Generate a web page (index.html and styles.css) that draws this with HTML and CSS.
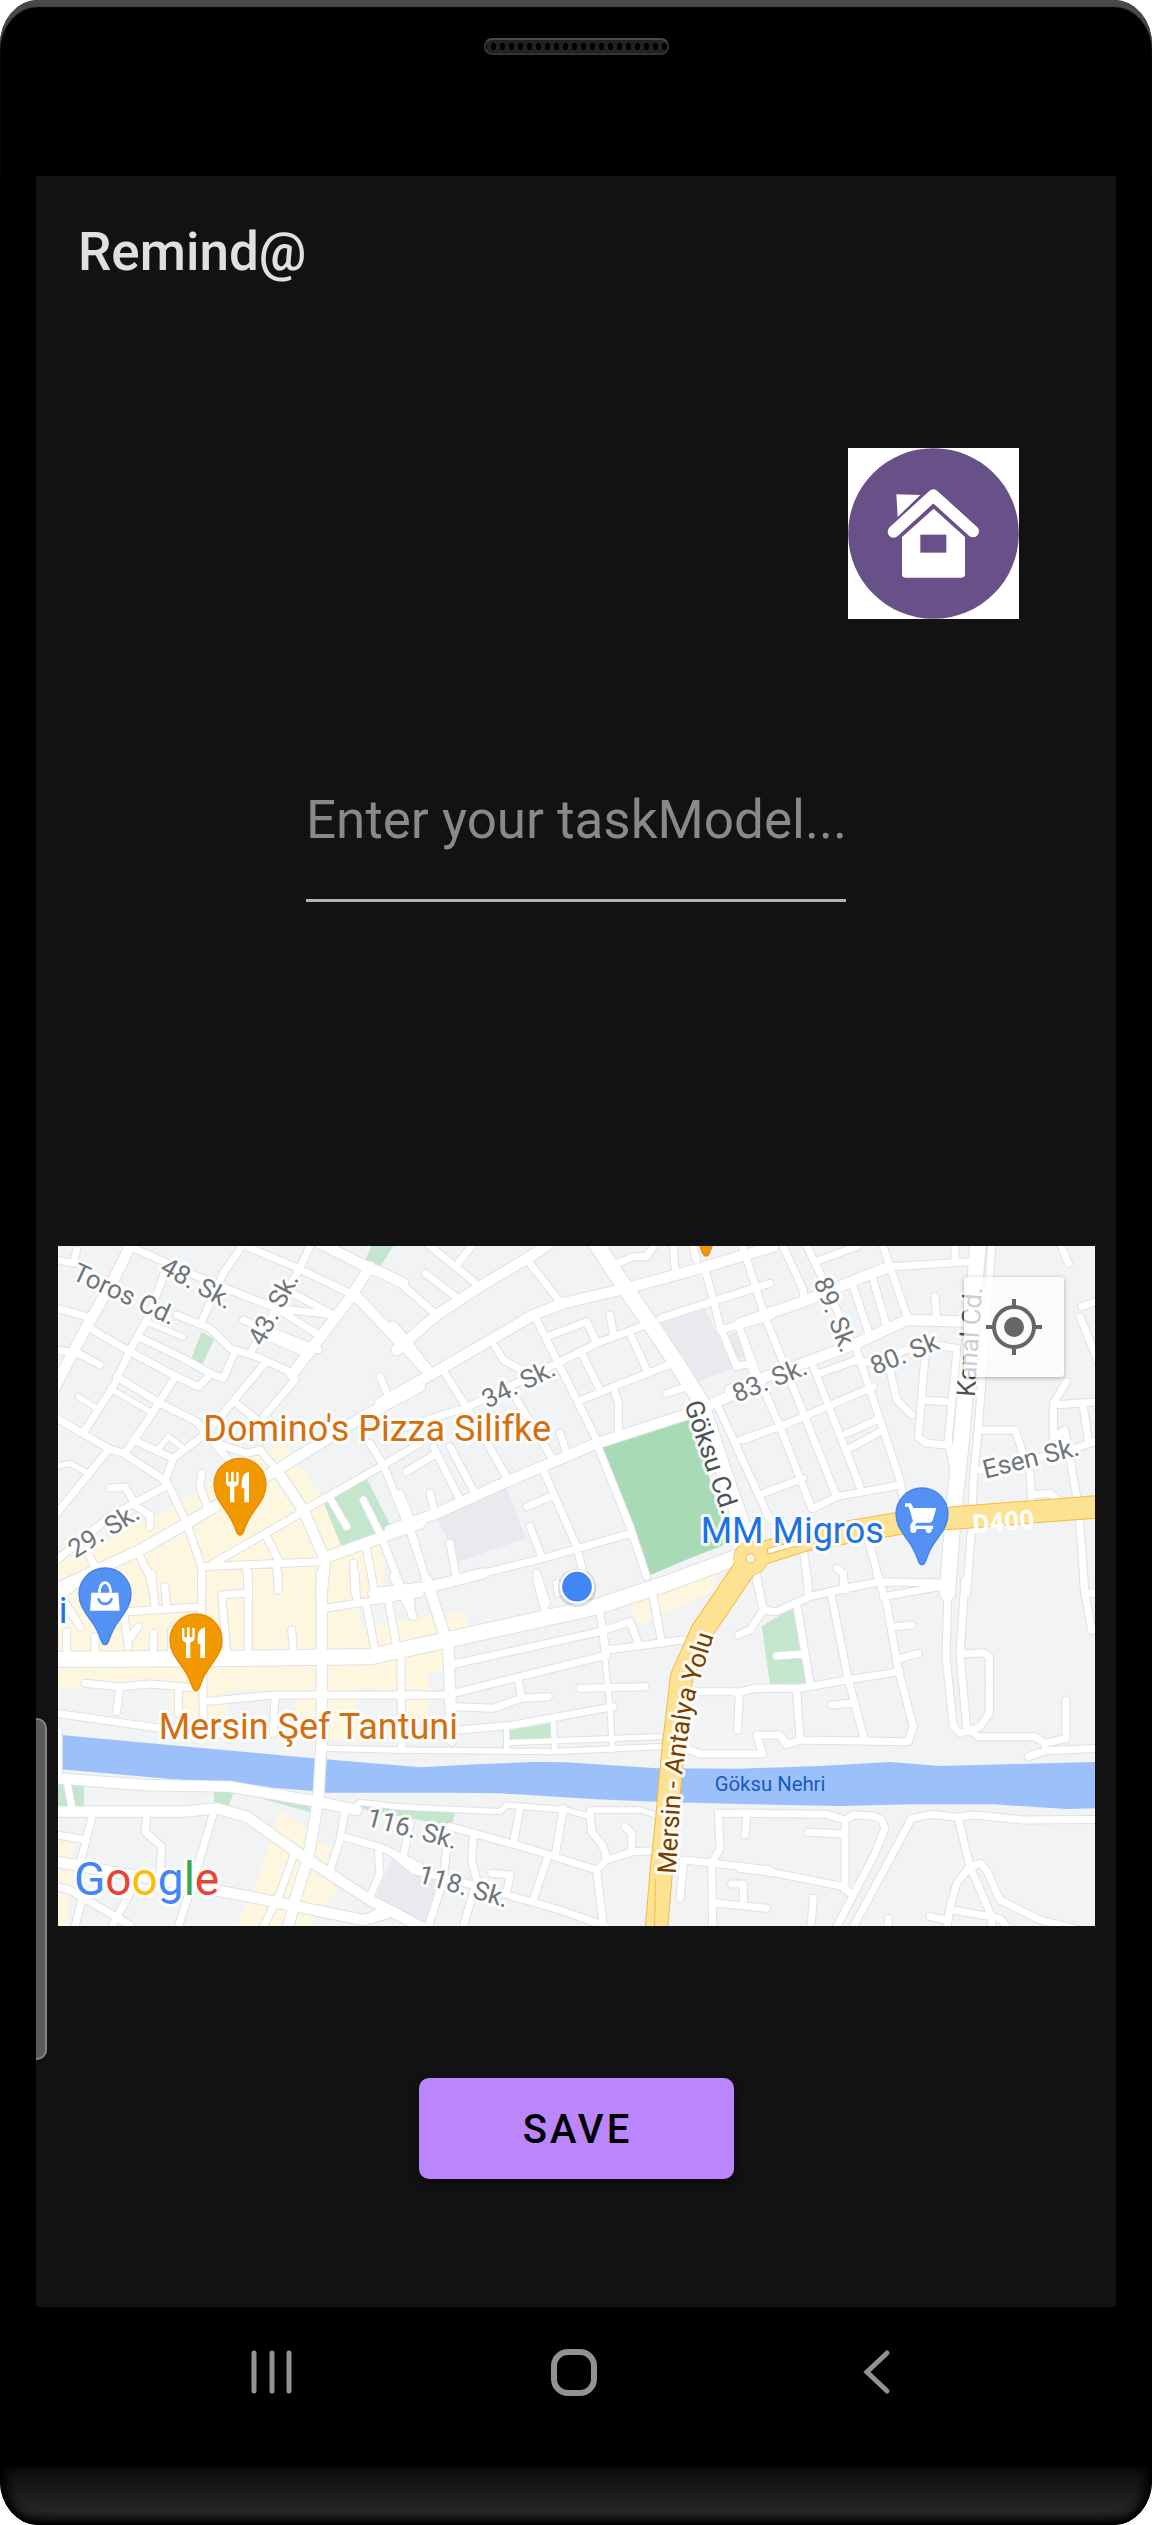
FILE: index.html
```html
<!DOCTYPE html>
<html lang="en">
<head>
<meta charset="utf-8">
<meta name="viewport" content="width=device-width, initial-scale=1">
<title>Remind@</title>
<link rel="stylesheet" href="styles.css">
</head>
<body>
<div class="phone">
  <div class="phone-top">
    <div class="speaker"></div>
  </div>
  <main class="screen">
    <div class="edge-handle"></div>
    <h1 class="title">Remind@</h1>
    <svg class="home-badge" viewBox="0 0 513 513" role="img" aria-label="Home">
      <rect width="513" height="513" fill="#fff"/>
      <circle cx="256.500" cy="256.500" r="256" fill="#685089"/>
      <path d="M145 139L217 141L149 207Z" fill="#fff"/>
      <path d="M137 251L256 142L375 250" fill="none" stroke="#fff" stroke-width="36" stroke-linecap="round" stroke-linejoin="round"/>
      <path d="M162 267L257 182L351 267V379Q351 389 341 389H172Q162 389 162 379Z" fill="#fff"/>
      <rect x="217" y="260" width="78" height="54" fill="#685089"/>
    </svg>
    <form class="task-form" id="task-form">
      <input class="task-input" type="text" aria-label="Task" placeholder="Enter your taskModel...">
    </form>
    <section class="map" aria-label="Map">
      <svg class="map-canvas" viewBox="0 0 3111 2040">
        <defs>
          <g id="streets-thin">
            <path transform="translate(1026 1002)" d="M320 450V510M320 488L780 470M460 430L465 510M-220 505L-10 510L460 515L780 500M-140 685L-120 667L-10 680L300 695L320 675L500 690L570 710M570 690L720 690L770 705M600 100L630 380L637 510"/>
            <path transform="translate(-24 -18)" d="M85 470L140 505M180 445L300 515M20 680L60 670L105 695M320 635L355 590L395 620M300 250L400 292"/>
          </g>
          <g id="streets">
            <path transform="translate(-24 -18)" d="M590 20L745 85L910 165M780 18L750 85L600 340M575 20L520 100L455 245M230 15L420 100L540 150L680 205L850 225M680 205L805 285M700 145L850 225M380 225L480 265L540 325L620 350L730 400L735 420L640 530M350 80L300 220L240 330L190 440L105 570M120 265L240 335L370 405L445 440L480 405M275 295L400 355L490 405L520 415L555 335M20 205L110 230M20 330L85 340L150 375M80 30L70 70L20 60M200 410L330 490L440 545L560 690M370 420L310 515L225 640M20 535L175 625L220 640L350 725L410 850L455 980V1060M175 630L20 820M250 600L370 655L345 725M370 655L455 590M640 375L520 520L455 590M560 490L620 540M580 240L805 330M650 290L760 335M990 410L1015 470M180 745L225 740L260 800L300 825V860M345 740L180 830L20 960M455 700L450 740L475 810M500 610L590 640L630 630L680 690M760 815L490 970M455 980L810 965M745 820L1000 675L1110 610M960 610L1000 675L1075 860L1110 960M1070 695L1110 670M840 775L890 860M940 780L990 880L1060 1060M650 890L690 970M270 950L300 1010L310 1060M120 950L140 990M590 980L595 1060M680 980L685 1050M950 930L975 1060M910 970L915 1060"/>
            <path transform="translate(1026 -18)" d="M-10 120L110 225M75 100L180 180M215 18L170 75M80 10L240 140M385 65L480 185M135 400L205 510L325 720M-10 570L205 500L470 370L590 310L750 250M410 240L480 380L590 600M285 320L310 360L400 410M440 290L560 245L590 310M630 225L640 280M545 340L600 450M690 280L740 390M545 480L640 440L830 365M640 440L655 490V590M20 695L110 640M100 620L180 780M150 620L225 760M350 480L460 660M480 580L500 640M590 610L690 860L740 1010M430 690L530 920L550 1000M380 800L450 770M390 860L425 950M90 760L105 820M-20 1060L90 1040L430 955L690 880M30 860L90 1060M150 910L170 1020M0 760L40 860M800 460L860 440M640 75L700 50L740 50L760 20M820 20L825 85M880 20L890 60M780 235L1060 145L1110 130M915 90L940 180L960 260L1010 380L1050 370M960 270L1110 230M1030 290L1060 400M950 490L1110 840M1030 600L1110 570M410 1000L440 1090M470 1030L475 1060"/>
            <path transform="translate(2046 -18)" d="M10 25L75 230L190 520L290 770M0 270L50 400L120 560L215 805M220 380L360 740M350 330L420 540L480 720L490 780M0 160L50 140M130 20L190 150V180M200 18L250 120L340 320M240 60L350 20M430 20L450 80L505 240M340 140L390 290M400 120L440 260M645 20V65M450 80L690 65M585 170L590 240M0 600L120 560L260 500L400 440M240 400L350 360L400 370L550 310L650 325M320 580L410 540M320 630L430 570M70 760L190 715M220 805L290 770L480 735M450 390L470 480L515 525M555 350L535 590L560 610L620 615M550 480L620 485M650 340L625 600L640 680M755 20L735 300L715 560L700 720L695 860L680 1060M715 570H825L870 700L875 780M875 765L930 760L955 780M965 20L985 70M1025 200L1080 180M1020 230L1080 380M980 425L940 490V590L975 570L1010 770M940 495L1080 485M1030 500L1045 600M720 690L960 640L1080 600M1018 840L1035 1060M190 930L205 1040M380 880L420 1030M290 985L310 1000L315 1050M205 1070L420 1025L625 1030M50 1000L60 1060"/>
            <path transform="translate(-24 1002)" d="M455 -20V90L460 420M230 95L455 80M305 -20L315 80M345 20L350 80M220 90L235 200M265 140L235 180M50 155V210M135 170V210M310 160V210M365 150V210M20 60L80 10M40 60L90 140M595 -20V210M595 38L515 45L530 210M685 -20V25M725 150L730 210M825 85L1110 40M915 -20L920 60M950 80L975 210M1015 60L1040 200M1030 -10L1090 110M105 310L210 320L300 312L450 325M210 320L200 395M385 330V400M460 365L670 345H1110M675 350L670 460M1053 240L1055 510M20 400L330 445L600 470M50 600L65 680M125 715L90 850M20 765L110 780M290 715L285 755L335 800L330 880M490 700L440 870L385 1040M20 920L60 930L240 1035M95 960L75 1040M240 940L190 1030M730 830L690 940L640 1040M885 690L870 780L840 870M880 770L1000 805L1110 860M985 820L990 880L960 950M1080 730L1060 830M940 1020L1000 990M25 450V590"/>
            <path transform="translate(1026 1002)" d="M30 50L35 105M150 255L600 155L690 125L715 190M600 100L620 225M160 340L360 290L620 225M620 210L850 180M355 300L365 355L445 350M365 355L280 385L165 380M540 325L735 320M-10 345H160M180 450L340 435L640 380M410 0L435 90M760 50L785 190M1070 0L1090 90L1050 150L1015 165M890 335H1020L1070 325H1110M1018 340L1013 450M870 510L900 522M360 685L340 790M490 685L465 830M570 700L575 755L610 800L620 840M150 740L400 810L590 870L620 840L700 815L760 812M590 870L610 1040M440 840L400 960M220 770L215 840L230 900L190 1040M140 800L130 900L85 1040M275 880L330 885L320 940M-10 830L40 870L200 910L480 990L620 1040M675 740L695 760V810M850 840L940 850L1110 870M850 850L840 955M1110 700H955L960 805L935 850L938 1040M1040 710L1035 765M995 912H1030V970M940 968L1100 985"/>
            <path transform="translate(2046 1002)" d="M50 0L70 90L110 95L210 50L310 25L420 5M200 -20L205 45M310 -20V20M410 -20L440 70L475 270L520 440L505 485L180 480L140 495L120 465H50L68 522H-120M430 50L625 15M460 140L515 135M480 235L535 220M-10 340L40 325H180L320 300L480 275M170 70L210 310M275 50L325 300L375 485M110 228L190 222M170 330L180 475M275 375L345 368M625 0L618 230L640 440L660 460L720 440L748 400V230L730 218L660 222M675 0L660 220L680 445L715 470H885L915 490L978 475V360M865 530L915 512L1080 505M915 490V510M1030 0L1035 40L1055 150H1080M1035 40H1080M0 700L260 703L315 720L340 705L400 708L425 720L435 745L405 820L285 1050M315 720V930M205 757L310 762M0 865L100 878L310 920L330 940M335 1050L515 715L575 703L650 712L705 705L850 720L1080 718M655 715L690 860L650 910L630 980L620 1050M690 860L755 1010V1050M690 860L720 850L740 870L780 960L900 1020L1020 1050M570 1010L620 1020M640 990L780 1015L800 1040M220 955L212 1050M445 1015V1050"/>
          </g>
          <g id="avenues">
            <path transform="translate(-24 -18)" d="M240 20L190 120L110 260L10 450M960 80L900 175L725 405M1110 440L940 530L680 690L410 850L270 930L10 1050M680 690L760 810L825 960L815 1060M800 5L960 85L1000 100L1060 130M820 955L1110 850M915 165L1140 400"/>
            <path transform="translate(1026 -18)" d="M-60 490L100 400L400 225L490 190L680 145L900 85L1120 20M90 400L-20 260M-10 330L110 225L240 140L390 50L450 10M-30 870L110 820L320 725L450 670L590 610L870 520L1010 460"/>
            <path transform="translate(2046 -18)" d="M0 250L190 185L370 110L450 80M-30 450L190 370L350 310L500 240L680 245"/>
            <path transform="translate(-24 1002)" d="M815 -20V480L805 660L775 830L735 960L715 1040M20 595L280 615L540 620L800 665L920 690M20 695H400L500 685L590 710L760 830L960 960L1130 1050M20 845L330 900L600 950L720 975L940 1020L1010 1000"/>
            <path transform="translate(1026 1002)" d="M-80 40L90 20L250 -20M80 0L145 200L155 480"/>
          </g>
          <g id="boulevards">
            <path transform="translate(1026 -18)" d="M570 -20L620 60L680 150L750 250L830 370L900 480L990 750L1050 920"/>
            <path transform="translate(2046 -18)" d="M715 0L690 300L660 640L640 820L622 1060"/>
            <path transform="translate(-24 1002)" d="M10 238L560 235L960 230L1190 180L1640 80L1850 10L2080 -75"/>
          </g>
          <g id="highway">
            <path transform="translate(2046 -18)" d="M20 955L200 898L480 850L640 834L1080 800"/>
            <path transform="translate(1026 1002)" d="M1050 -60L1000 15L905 155L845 290L820 500L800 720L785 860L768 1060"/>
          </g>
          <path id="pin" d="M0 152C-14 152 -10 122 -42 80C-62 52 -78 32 -78 0A78 78 0 0 1 78 0C78 32 62 52 42 80C10 122 14 152 0 152Z"/>
          <g id="cutlery">
            <path d="M-37 -36V-8Q-37 5 -25 7V54H-12V7Q1 5 1 -8V-36H-6V-8H-14V-38H-22V-8H-30V-36Z"/>
            <path d="M32 -38Q10 -34 10 -5V12H18V54H32Z"/>
          </g>
          <path id="highway-label" d="M1853 1885L1872 1585L1905 1370L1985 1110"/>
        </defs>

        <rect width="3111" height="2040" fill="#f1f3f4"/>
        <g fill="#fef7e0">
          <path transform="translate(-24 -18)" d="M20 970L370 800L600 650L640 640L700 610L830 790L880 920L980 880L1000 970V1070H20Z"/>
          <path transform="translate(-24 1002)" d="M20 -50H930V140L1060 130L1110 110V350H980V325H920V480H735V330H535L530 420L360 400V325H20ZM690 690L780 750L810 790L850 800L840 900L860 930L780 1040H560L630 880ZM24 780L70 790L50 1040H24Z"/>
          <path transform="translate(1026 1002)" d="M-10 120L195 95L205 140L140 160L130 270L85 280V420H-10ZM690 70L740 55L755 120L720 140ZM760 45L800 40L960 -40L930 40L770 110Z"/>
        </g>
        <g fill="#c3e6cd">
          <path transform="translate(-24 -18)" d="M965 18H1030L990 80L945 60ZM455 275L492 298L455 378L422 360ZM822 790L950 715L1023 860L875 922Z"/>
          <path transform="translate(-24 1002)" d="M24 605L102 612V678H24ZM492 634H552L537 676L492 665ZM600 645L780 672V697Z"/>
          <path transform="translate(1026 1002)" d="M-130 675L165 698L155 738L-100 690ZM325 452L455 430V475L328 480ZM1085 138L1178 85L1218 310L1110 312Z"/>
        </g>
        <path transform="translate(1026 -18)" fill="#a8dab5" d="M605 620L855 530L885 560L985 910L870 955L750 1005Z"/>
        <g fill="#e8eaed">
          <path transform="translate(1026 -18)" d="M770 255L915 205L1000 385L880 430L840 350ZM110 835L320 745L378 895L175 965ZM985 285L1020 275L1040 350L1010 360Z"/>
          <path transform="translate(1026 1002)" d="M-25 840L130 905L80 1030L-80 970Z"/>
        </g>
        <path fill="#9cc0fa" d="M9 1467L766 1537L1086 1564L1256 1555L1426 1548L1526 1549L1796 1567L2046 1568L2286 1560L2496 1548L2646 1560L2876 1554L3111 1548V1687L3026 1689L2806 1675H2566L2346 1680L2046 1674L1796 1667L1616 1660L1326 1642L1176 1640H806L766 1635L566 1619L9 1570Z"/>

        <use href="#streets-thin" class="road thin-casing"/>
        <use href="#streets" class="road street-casing"/>
        <use href="#avenues" class="road avenue-casing"/>
        <use href="#boulevards" class="road boulevard-casing"/>
        <use href="#streets-thin" class="road thin"/>
        <use href="#streets" class="road street"/>
        <use href="#avenues" class="road avenue"/>
        <use href="#boulevards" class="road boulevard"/>
        <use href="#highway" class="road highway-casing"/>
        <circle cx="2078" cy="937" r="52" fill="#f9b93a"/>
        <use href="#highway" class="road highway"/>
        <circle cx="2078" cy="937" r="50" fill="#fde293"/>
        <circle cx="2078" cy="937" r="14" fill="#f1f3f4" stroke="#f9b93a" stroke-width="3"/>
        <path d="M2128 908L2230 880V896L2130 924Z" fill="#fff" stroke="#f9b93a" stroke-width="3"/>
        <path d="M1792 1900L1790 2040" fill="none" stroke="#f9b93a" stroke-width="3"/>

        <g class="label street-label">
          <text transform="translate(38 98) rotate(25)">Toros Cd.</text>
          <text transform="translate(302 78) rotate(29)">48. Sk.</text>
          <text transform="translate(614 304) rotate(-62)">43. Sk.</text>
          <text transform="translate(52 938) rotate(-32)">29. Sk.</text>
          <text transform="translate(1288 488) rotate(-26)">34. Sk.</text>
          <text transform="translate(2036 470) rotate(-22)">83. Sk.</text>
          <text transform="translate(2266 106) rotate(69)">89. Sk.</text>
          <text transform="translate(2450 388) rotate(-22)">80. Sk</text>
          <text transform="translate(2782 698) rotate(-14)">Esen Sk.</text>
          <text transform="translate(922 1738) rotate(15)">116. Sk.</text>
          <text transform="translate(1076 1908) rotate(16)">118. Sk.</text>
        </g>
        <g class="label avenue-label">
          <text transform="translate(1878 474) rotate(71)">Göksu Cd.</text>
          <text transform="translate(2750 454) rotate(-86)">Kanal Cd.</text>
        </g>
        <text class="label route-label"><textPath href="#highway-label">Mersin - Antalya Yolu</textPath></text>
        <text class="shield-label" transform="translate(2746 862) rotate(-5)">D400</text>
        <text class="river-label" x="1970" y="1634">Göksu Nehri</text>

        <g fill="#f29900" stroke="#ea8600" stroke-width="4">
          <use href="#pin" x="546" y="715"/>
          <use href="#pin" x="414" y="1182"/>
          <use href="#pin" x="1944" y="-122"/>
        </g>
        <g fill="#5491f5" stroke="#4583ea" stroke-width="4">
          <use href="#pin" x="141" y="1044"/>
          <use href="#pin" x="2592" y="804"/>
        </g>
        <g fill="#fff">
          <use href="#cutlery" x="541" y="715"/>
          <use href="#cutlery" x="409" y="1182"/>
          <path d="M100 1040H181L185 1094H96Z"/>
          <path d="M2541 772H2559L2566 786H2635L2624 823Q2622 830 2614 830H2576L2570 839H2625V849H2563Q2552 847 2559 834L2565 825L2552 782H2541Z"/>
          <circle cx="2566" cy="852" r="9"/>
          <circle cx="2612" cy="852" r="9"/>
        </g>
        <path d="M124 1040C124 1000 158 1000 158 1040" fill="none" stroke="#fff" stroke-width="8"/>
        <path d="M121 1057C125 1079 157 1079 161 1057" fill="none" stroke="#5491f5" stroke-width="8"/>

        <g class="label place-label">
          <text class="food" x="436" y="584">Domino's Pizza Silifke</text>
          <text class="food" x="302" y="1480">Mersin Şef Tantuni</text>
          <text class="shop" x="1928" y="890">MM Migros</text>
          <text class="shop" x="2" y="1130">i</text>
        </g>
        <circle cx="1557" cy="1026" r="58" fill="#000" opacity=".12"/>
        <circle cx="1557" cy="1022" r="48" fill="#4285f4" stroke="#fff" stroke-width="7"/>
        <text class="label brand" x="48" y="1947"><tspan fill="#4285f4">G</tspan><tspan fill="#ea4335">o</tspan><tspan fill="#fbbc04">o</tspan><tspan fill="#4285f4">g</tspan><tspan fill="#34a853">l</tspan><tspan fill="#ea4335">e</tspan></text>
      </svg>
      <button class="locate" type="button" aria-label="My location">
        <svg viewBox="0 0 56 56" width="56" height="56">
          <circle cx="28" cy="28" r="10" fill="#666"/>
          <circle cx="28" cy="28" r="20" fill="none" stroke="#666" stroke-width="4"/>
          <path d="M28 0V9M28 47V56M0 28H9M47 28H56" stroke="#666" stroke-width="4"/>
        </svg>
      </button>
    </section>
    <button class="save" type="submit" form="task-form">SAVE</button>
  </main>
  <nav class="system-nav">
    <button type="button" aria-label="Recent apps">
      <svg viewBox="0 0 48 48" width="48" height="48"><path d="M6 5V43M24 5V43M41 5V43" stroke-width="5"/></svg>
    </button>
    <button type="button" aria-label="Home">
      <svg viewBox="0 0 48 48" width="48" height="48"><rect x="4" y="4" width="40" height="41" rx="14" stroke-width="6"/></svg>
    </button>
    <button type="button" aria-label="Back">
      <svg viewBox="0 0 48 48" width="48" height="48"><path d="M35 5L15 24L35 43" stroke-width="5"/></svg>
    </button>
  </nav>
  <div class="phone-chin"></div>
</div>
</body>
</html>
```
FILE: styles.css
```css
* {
  box-sizing: border-box;
}

body {
  margin: 0;
  background: #fff;
  font-family: Roboto, "Liberation Sans", sans-serif;
}

button {
  font: inherit;
  border: 0;
  padding: 0;
  background: none;
}

.phone {
  display: flex;
  flex-direction: column;
  overflow: hidden;
  background: #000;
  border-radius: 38px 38px 38px 38px / 44px;
}

.phone-top {
  height: 176px;
  padding-top: 38px;
  border-radius: 38px 38px 0 0 / 44px 44px 0 0;
  box-shadow: inset 0 7px 1px #484848;
}

.speaker {
  width: 185px;
  height: 17px;
  margin: 0 auto;
  border: 2px solid #333;
  border-top-color: #4a4a4a;
  border-radius: 8px;
  background: radial-gradient(ellipse 3px 4px at center, #000 80%, #222) 3px 0 / 9px 13px #1a1a1a;
}

.screen {
  position: relative;
  display: flex;
  flex-direction: column;
  margin: 0 36px;
  padding-bottom: 128px;
  background: #121212;
}

.title {
  margin: 46px 42px 0;
  font-size: 53px;
  line-height: 60px;
  font-weight: 500;
  color: #e0e0e0;
}

.home-badge {
  display: block;
  width: 171px;
  margin: 166px 97px 0 0;
  align-self: flex-end;
}

.task-form {
  width: 50%;
  margin: 152px auto 0;
}

.task-input {
  display: block;
  width: 100%;
  height: 131px;
  padding: 0 0 30px;
  border: 0;
  border-bottom: 3px solid #b3b3b3;
  border-radius: 0;
  background: none;
  font: 400 53px/60px Roboto, "Liberation Sans", sans-serif;
  color: #fff;
}

.task-input::placeholder {
  color: #898989;
  opacity: 1;
}

.map {
  position: relative;
  margin: 344px 21px 0 22px;
}

.map-canvas {
  display: block;
  width: 100%;
}

.road {
  fill: none;
  stroke: #fff;
  stroke-linecap: round;
  stroke-linejoin: round;
}

.thin { stroke-width: 16px; }
.street { stroke-width: 21px; }
.avenue { stroke-width: 31px; }
.boulevard { stroke-width: 46px; }
.highway { stroke: #fde293; stroke-width: 64px; }
.thin-casing { stroke: #dfe1e4; stroke-width: 22px; }
.street-casing { stroke: #dfe1e4; stroke-width: 27px; }
.avenue-casing { stroke: #dfe1e4; stroke-width: 37px; }
.boulevard-casing { stroke: #dfe1e4; stroke-width: 52px; }
.highway-casing { stroke: #f9b93a; stroke-width: 70px; }

.label {
  paint-order: stroke;
  stroke: #fff;
  stroke-opacity: .85;
  stroke-width: 18px;
  stroke-linejoin: round;
}

.street-label { font-size: 78px; fill: #70757a; }
.avenue-label { font-size: 78px; fill: #4d5156; }
.route-label { font-size: 78px; fill: #7a3e00; }
.shield-label { font-size: 78px; font-weight: 700; fill: #fff; }
.river-label { font-size: 61px; fill: #185abc; }
.place-label { font-size: 108px; }
.food { fill: #d56e0c; }
.shop { fill: #1a73e8; }
.brand { font-size: 138px; font-weight: 400; }

.locate {
  position: absolute;
  top: 31px;
  right: 31px;
  display: grid;
  place-items: center;
  width: 100px;
  height: 100px;
  border-radius: 4px;
  background: rgba(255, 255, 255, .72);
  box-shadow: 0 1px 4px rgba(0, 0, 0, .3);
}

.save {
  width: 315px;
  height: 101px;
  margin: 152px auto 0;
  padding: 3px 0 0 3px;
  border-radius: 10px;
  background: #bb86fc;
  box-shadow: 0 3px 6px rgba(0, 0, 0, .5);
  font-size: 40px;
  line-height: 48px;
  font-weight: 500;
  letter-spacing: 3px;
  color: #000;
}

.system-nav {
  display: flex;
  justify-content: center;
  align-items: flex-start;
  gap: 204px;
  height: 160px;
  padding: 16px 5px 0 0;
}

.system-nav button {
  display: grid;
  place-items: center;
  width: 98px;
  height: 98px;
}

.system-nav svg {
  fill: none;
  stroke: #929292;
  stroke-linecap: round;
}

.edge-handle {
  position: absolute;
  top: 1542px;
  left: 0;
  width: 11px;
  height: 342px;
  border: 2px solid #858585;
  border-left: 0;
  border-radius: 0 10px 10px 0;
  background: #5b5b5b;
}

.phone-chin {
  height: 58px;
  border-radius: 0 0 38px 38px / 0 0 44px 44px;
  background: linear-gradient(#0f0f0f, #181818 35%, #262626 75%, #101010);
  box-shadow: inset 0 -3px 8px #000, inset 12px 0 14px -6px #000, inset -12px 0 14px -6px #000;
}
```
